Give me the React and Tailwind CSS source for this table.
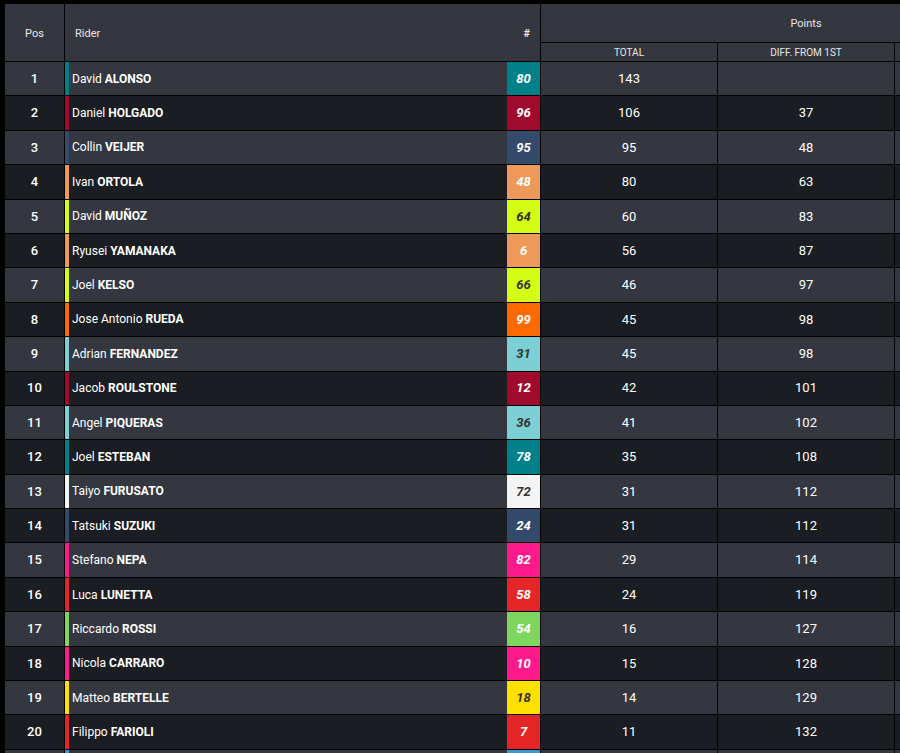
import React from 'react'

const riders = [
  { pos: 1, first: 'David', last: 'ALONSO', num: 80, color: '#00818a', dark: false, total: 143, diff: '' },
  { pos: 2, first: 'Daniel', last: 'HOLGADO', num: 96, color: '#a00a2c', dark: false, total: 106, diff: 37 },
  { pos: 3, first: 'Collin', last: 'VEIJER', num: 95, color: '#344a6b', dark: false, total: 95, diff: 48 },
  { pos: 4, first: 'Ivan', last: 'ORTOLA', num: 48, color: '#ee985a', dark: false, total: 80, diff: 63 },
  { pos: 5, first: 'David', last: 'MUÑOZ', num: 64, color: '#d4fc14', dark: true, total: 60, diff: 83 },
  { pos: 6, first: 'Ryusei', last: 'YAMANAKA', num: 6, color: '#ee985a', dark: false, total: 56, diff: 87 },
  { pos: 7, first: 'Joel', last: 'KELSO', num: 66, color: '#d4fc14', dark: true, total: 46, diff: 97 },
  { pos: 8, first: 'Jose Antonio', last: 'RUEDA', num: 99, color: '#ff6a00', dark: false, total: 45, diff: 98 },
  { pos: 9, first: 'Adrian', last: 'FERNANDEZ', num: 31, color: '#7ccfd5', dark: true, total: 45, diff: 98 },
  { pos: 10, first: 'Jacob', last: 'ROULSTONE', num: 12, color: '#a00a2c', dark: false, total: 42, diff: 101 },
  { pos: 11, first: 'Angel', last: 'PIQUERAS', num: 36, color: '#7ccfd5', dark: true, total: 41, diff: 102 },
  { pos: 12, first: 'Joel', last: 'ESTEBAN', num: 78, color: '#00818a', dark: false, total: 35, diff: 108 },
  { pos: 13, first: 'Taiyo', last: 'FURUSATO', num: 72, color: '#f4f4f4', dark: true, total: 31, diff: 112 },
  { pos: 14, first: 'Tatsuki', last: 'SUZUKI', num: 24, color: '#344a6b', dark: false, total: 31, diff: 112 },
  { pos: 15, first: 'Stefano', last: 'NEPA', num: 82, color: '#ff1a8c', dark: false, total: 29, diff: 114 },
  { pos: 16, first: 'Luca', last: 'LUNETTA', num: 58, color: '#e52629', dark: false, total: 24, diff: 119 },
  { pos: 17, first: 'Riccardo', last: 'ROSSI', num: 54, color: '#7ed65e', dark: false, total: 16, diff: 127 },
  { pos: 18, first: 'Nicola', last: 'CARRARO', num: 10, color: '#ff1a8c', dark: false, total: 15, diff: 128 },
  { pos: 19, first: 'Matteo', last: 'BERTELLE', num: 18, color: '#ffe000', dark: true, total: 14, diff: 129 },
  { pos: 20, first: 'Filippo', last: 'FARIOLI', num: 7, color: '#e52629', dark: false, total: 11, diff: 132 },
  { pos: '', first: '', last: '', num: '', color: '#3d95d6', dark: false, total: '', diff: '' },
]

const cols = 'grid grid-cols-[59px_475px_176px_176px_176px] gap-x-px'

function Row({ r, i }) {
  const bg = i % 2 === 0 ? 'bg-[#34373f]' : 'bg-[#1a1d21]'
  return (
    <div className={`${cols} h-[33.4px] shrink-0`}>
      <div className={`${bg} flex items-center justify-center text-[13px] font-medium text-white`}>{r.pos}</div>
      <div className={`${bg} flex items-stretch`}>
        <div className="w-[4px] shrink-0" style={{ background: r.color }} />
        <div className="flex-1 flex items-center pl-[3px] text-[12px] text-white">
          {r.first}&nbsp;<span className="font-bold">{r.last}</span>
        </div>
        <div className={`w-[33px] shrink-0 flex items-center justify-center text-[13px] font-bold italic ${r.dark ? 'text-[#333]' : 'text-white'}`}
          style={{ background: r.color }}>
          {r.num}
        </div>
      </div>
      <div className={`${bg} flex items-center justify-center text-[13px] text-white`}>{r.total}</div>
      <div className={`${bg} flex items-center justify-center text-[13px] text-white`}>{r.diff}</div>
      <div className={bg} />
    </div>
  )
}

export default function App() {
  return (
    <div className="w-[900px] h-[753px] overflow-hidden bg-black pt-[4px] pl-[5px] font-['Roboto',sans-serif]">
      <div className="flex flex-col gap-y-px w-[1200px]">
        {/* Header */}
        <div className={`${cols} grid-rows-[38px_18px] gap-y-px text-[#e8e8e8]`}>
          <div className="row-span-2 bg-[#34373f] flex items-center justify-center pt-[3px] text-[11px]">Pos</div>
          <div className="row-span-2 bg-[#34373f] flex items-center justify-between pt-[3px] px-[10px] text-[11px]">
            <span>Rider</span>
            <span className="font-bold">#</span>
          </div>
          <div className="col-span-3 bg-[#34373f] flex items-center justify-center pt-[3px] text-[11px]">Points</div>
          <div className="bg-[#34373f] flex items-center justify-center text-[10px]">TOTAL</div>
          <div className="bg-[#34373f] flex items-center justify-center text-[10px]">DIFF. FROM 1ST</div>
          <div className="bg-[#34373f]" />
        </div>

        {riders.map((r, i) => <Row key={i} r={r} i={i} />)}
      </div>
    </div>
  )
}
